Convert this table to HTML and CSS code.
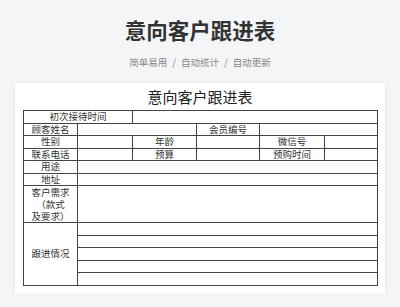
FILE: index.html
```html
<!DOCTYPE html>
<html lang="zh-CN">
<head>
<meta charset="utf-8">
<title>意向客户跟进表</title>
<link rel="stylesheet" href="styles.css">
</head>
<body>
<header class="hero">
  <h1 class="hero-title">意向客户跟进表</h1>
  <p class="hero-sub"><span>简单易用</span><span class="sep">/</span><span>自动统计</span><span class="sep">/</span><span>自动更新</span></p>
</header>
<main class="card">
  <div class="sheet-title">意向客户跟进表</div>
  <table class="sheet">
    <colgroup>
      <col class="c1"><col class="c2"><col class="c3"><col class="c4"><col class="c5"><col class="c6">
    </colgroup>
    <tbody>
      <tr><td colspan="2">初次接待时间</td><td colspan="4"></td></tr>
      <tr><td>顾客姓名</td><td colspan="2"></td><td>会员编号</td><td colspan="2"></td></tr>
      <tr><td>性别</td><td></td><td>年龄</td><td></td><td>微信号</td><td></td></tr>
      <tr><td>联系电话</td><td></td><td>预算</td><td></td><td>预购时间</td><td></td></tr>
      <tr><td>用途</td><td colspan="5"></td></tr>
      <tr><td>地址</td><td colspan="5"></td></tr>
      <tr class="tall"><td class="multi">客户需求<br>（款式<br>及要求）</td><td colspan="5"></td></tr>
      <tr><td rowspan="5">跟进情况</td><td colspan="5"></td></tr>
      <tr><td colspan="5"></td></tr>
      <tr><td colspan="5"></td></tr>
      <tr><td colspan="5"></td></tr>
      <tr><td colspan="5"></td></tr>
    </tbody>
  </table>
</main>
</body>
</html>
```
FILE: styles.css
```css
html, body {
  margin: 0;
  padding: 0;
}
body {
  background: #f4f5f7;
  font-family: "Noto Sans CJK SC", "Noto Sans", sans-serif;
  color: #333;
}
.hero {
  padding-top: 15px;
  text-align: center;
}
.hero-title {
  margin: 0;
  font-size: 21.5px;
  line-height: 30px;
  font-weight: 700;
  color: #333;
}
.hero-sub {
  margin: 10px 0 0;
  font-size: 9.5px;
  line-height: 14px;
  color: #888;
}
.hero-sub .sep {
  margin: 0 5px;
}
.card {
  margin: 14px 15px 0;
  background: #fff;
  box-shadow: 0 1px 5px rgba(0, 0, 0, 0.08);
  padding: 0 8px 7px;
}
.sheet-title {
  text-align: center;
  font-size: 15px;
  line-height: 27px;
  color: #222;
}
.sheet {
  width: 354px;
  table-layout: fixed;
  border-collapse: collapse;
  border: 1px solid #444;
}
.sheet col.c1 { width: 54px; }
.sheet col.c2 { width: 55px; }
.sheet col.c3 { width: 64px; }
.sheet col.c4 { width: 63px; }
.sheet col.c5 { width: 65px; }
.sheet col.c6 { width: 53px; }
.sheet tr {
  height: 12.5px;
}
.sheet tr.tall {
  height: 37px;
}
.sheet td {
  border: 1px solid #444;
  padding: 0;
  font-size: 9.5px;
  line-height: 11.5px;
  text-align: center;
  color: #333;
  white-space: nowrap;
}
.sheet td.multi {
  line-height: 12px;
}
```
